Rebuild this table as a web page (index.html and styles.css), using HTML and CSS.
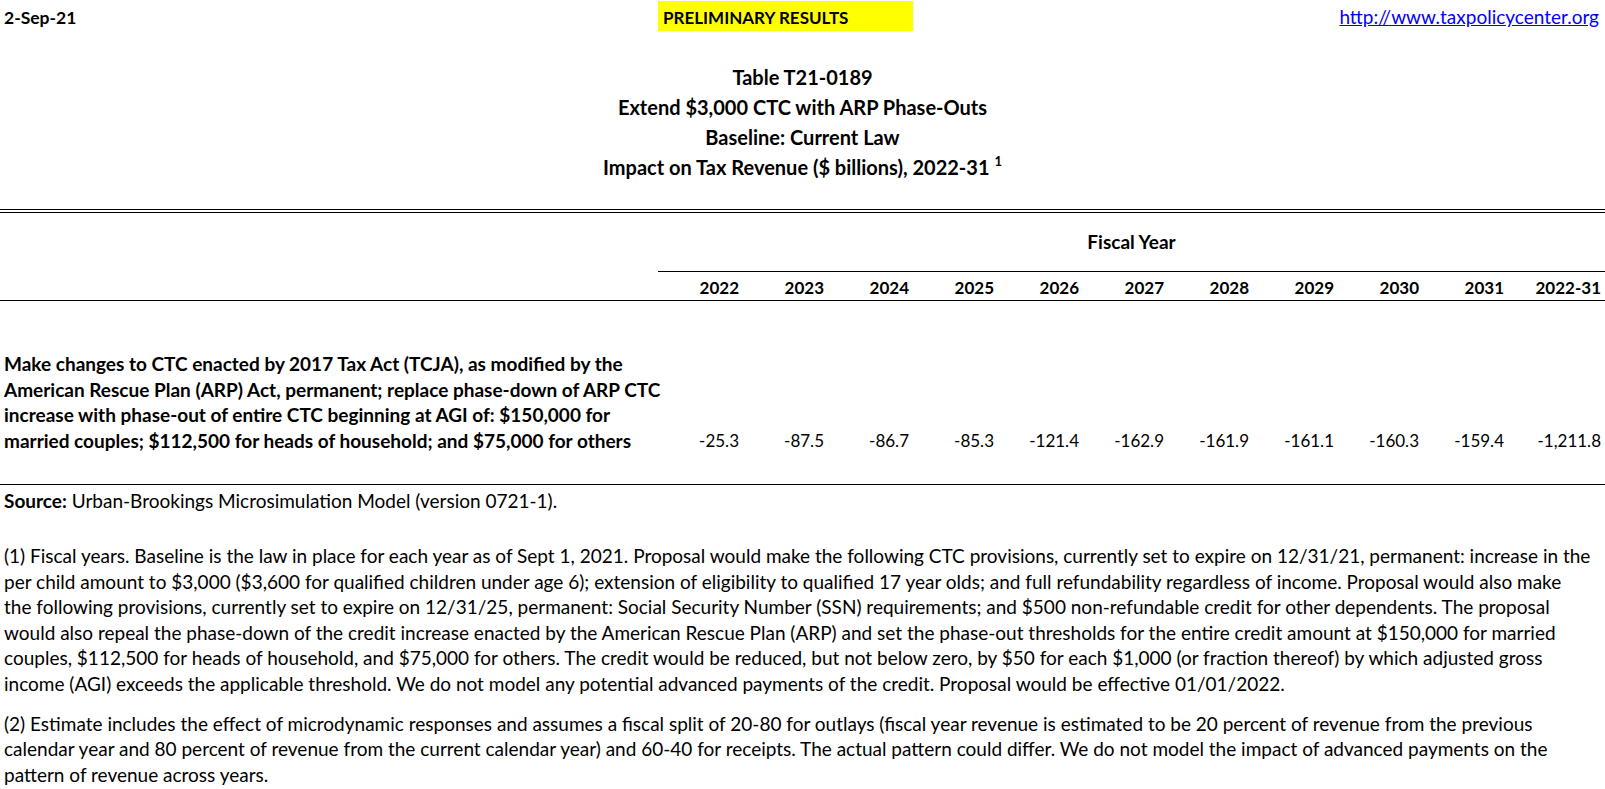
FILE: index.html
```html
<!DOCTYPE html>
<html lang="en">
<head>
<meta charset="utf-8">
<title>Table T21-0189</title>
<link rel="stylesheet" href="styles.css">
</head>
<body>
<div class="sheet">
  <div class="topbar grid">
    <div class="date">2-Sep-21</div>
    <div class="prelim">PRELIMINARY RESULTS</div>
    <div class="url"><a href="#">http://www.taxpolicycenter.org</a></div>
  </div>

  <div class="titles">
    <div class="tline">Table T21-0189</div>
    <div class="tline">Extend $3,000 CTC with ARP Phase-Outs</div>
    <div class="tline">Baseline: Current Law</div>
    <div class="tline">Impact on Tax Revenue ($ billions), 2022-31 <sup class="fn">1</sup></div>
  </div>

  <div class="double-rule"></div>

  <div class="fy grid">
    <div class="fy-label">Fiscal Year</div>
  </div>

  <div class="years grid">
    <div class="blank"></div>
    <div class="yr">2022</div>
    <div class="yr">2023</div>
    <div class="yr">2024</div>
    <div class="yr">2025</div>
    <div class="yr">2026</div>
    <div class="yr">2027</div>
    <div class="yr">2028</div>
    <div class="yr">2029</div>
    <div class="yr">2030</div>
    <div class="yr">2031</div>
    <div class="yr">2022-31</div>
  </div>

  <div class="data grid">
    <div class="desc">Make changes to CTC enacted by 2017 Tax Act (TCJA), as modified by the<br>American Rescue Plan (ARP) Act, permanent; replace phase-down of ARP CTC<br>increase with phase-out of entire CTC beginning at AGI of: $150,000 for<br>married couples; $112,500 for heads of household; and $75,000 for others</div>
    <div class="num">-25.3</div>
    <div class="num">-87.5</div>
    <div class="num">-86.7</div>
    <div class="num">-85.3</div>
    <div class="num">-121.4</div>
    <div class="num">-162.9</div>
    <div class="num">-161.9</div>
    <div class="num">-161.1</div>
    <div class="num">-160.3</div>
    <div class="num">-159.4</div>
    <div class="num">-1,211.8</div>
  </div>

  <div class="source"><b>Source:</b> Urban-Brookings Microsimulation Model (version 0721-1).</div>

  <p class="note note1">(1) Fiscal years. Baseline is the law in place for each year as of Sept 1, 2021. Proposal would make the following CTC provisions, currently set to expire on 12/31/21, permanent: increase in the<br>per child amount to $3,000 ($3,600 for qualified children under age 6); extension of eligibility to qualified 17 year olds; and full refundability regardless of income. Proposal would also make<br>the following provisions, currently set to expire on 12/31/25, permanent: Social Security Number (SSN) requirements; and $500 non-refundable credit for other dependents. The proposal<br>would also repeal the phase-down of the credit increase enacted by the American Rescue Plan (ARP) and set the phase-out thresholds for the entire credit amount at $150,000 for married<br>couples, $112,500 for heads of household, and $75,000 for others. The credit would be reduced, but not below zero, by $50 for each $1,000 (or fraction thereof) by which adjusted gross<br>income (AGI) exceeds the applicable threshold. We do not model any potential advanced payments of the credit. Proposal would be effective 01/01/2022.</p>

  <p class="note note2">(2) Estimate includes the effect of microdynamic responses and assumes a fiscal split of 20-80 for outlays (fiscal year revenue is estimated to be 20 percent of revenue from the previous<br>calendar year and 80 percent of revenue from the current calendar year) and 60-40 for receipts. The actual pattern could differ. We do not model the impact of advanced payments on the<br>pattern of revenue across years.</p>
</div>
</body>
</html>
```

FILE: styles.css
```css
* { box-sizing: border-box; }

html, body {
  margin: 0;
  padding: 0;
  background: #ffffff;
}

body {
  font-family: "Lato", "Carlito", "Liberation Sans", sans-serif;
  font-size: 19px;
  color: #000000;
  overflow: hidden;
}

.sheet {
  width: 1605px;
}

.grid {
  display: grid;
  grid-template-columns: 658px repeat(10, 85px) 1fr;
}

/* top bar */
.topbar {
  height: 33px;
  align-items: start;
}

.date {
  grid-column: 1;
  font-weight: 700;
  font-size: 17.5px;
  padding-left: 4px;
  line-height: 30px;
  margin-top: 3px;
}

.prelim {
  grid-column: 2 / 5;
  background: #ffff00;
  font-weight: 700;
  font-size: 17px;
  margin-top: 1px;
  height: 30px;
  line-height: 30px;
  padding-left: 5px;
  padding-top: 2px;
}

.url {
  grid-column: 9 / 13;
  text-align: right;
  padding-right: 6px;
  line-height: 30px;
  margin-top: 2px;
}

.url a {
  color: #0000ff;
  text-decoration: underline;
}

/* titles */
.titles {
  margin-top: 29px;
  text-align: center;
  font-weight: 700;
  font-size: 20px;
}

.tline {
  height: 30px;
  line-height: 30px;
}

.fn {
  font-size: 13px;
  font-weight: 700;
  vertical-align: 9px;
  line-height: 0;
}

.double-rule {
  margin-top: 27px;
  height: 4px;
  border-top: 1px solid #000;
  border-bottom: 1px solid #000;
}

/* fiscal year header */
.fy {
  height: 58px;
}

.fy-label {
  grid-column: 2 / 13;
  text-align: center;
  font-weight: 700;
  line-height: 58px;
  border-bottom: 1px solid #000;
}

.years {
  height: 30px;
  border-bottom: 1px solid #000;
  font-weight: 700;
  font-size: 17px;
  align-items: center;
}

.yr {
  text-align: right;
  padding-right: 4px;
  line-height: 29px;
  padding-top: 2px;
}

/* data row */
.data {
  padding-top: 50px;
  height: 184px;
  border-bottom: 1px solid #000;
  align-items: start;
}

.desc {
  font-weight: 700;
  padding-left: 4px;
  line-height: 25.6px;
  white-space: nowrap;
}

.num {
  font-size: 17px;
  text-align: right;
  padding-right: 4px;
  line-height: 25.6px;
  margin-top: 76.8px;
}

.source {
  padding-left: 4px;
  line-height: 32px;
}

.note {
  margin: 0;
  padding-left: 4px;
  line-height: 25.6px;
  white-space: nowrap;
}

.note1 {
  margin-top: 26px;
}

.note2 {
  margin-top: 14px;
}
```
